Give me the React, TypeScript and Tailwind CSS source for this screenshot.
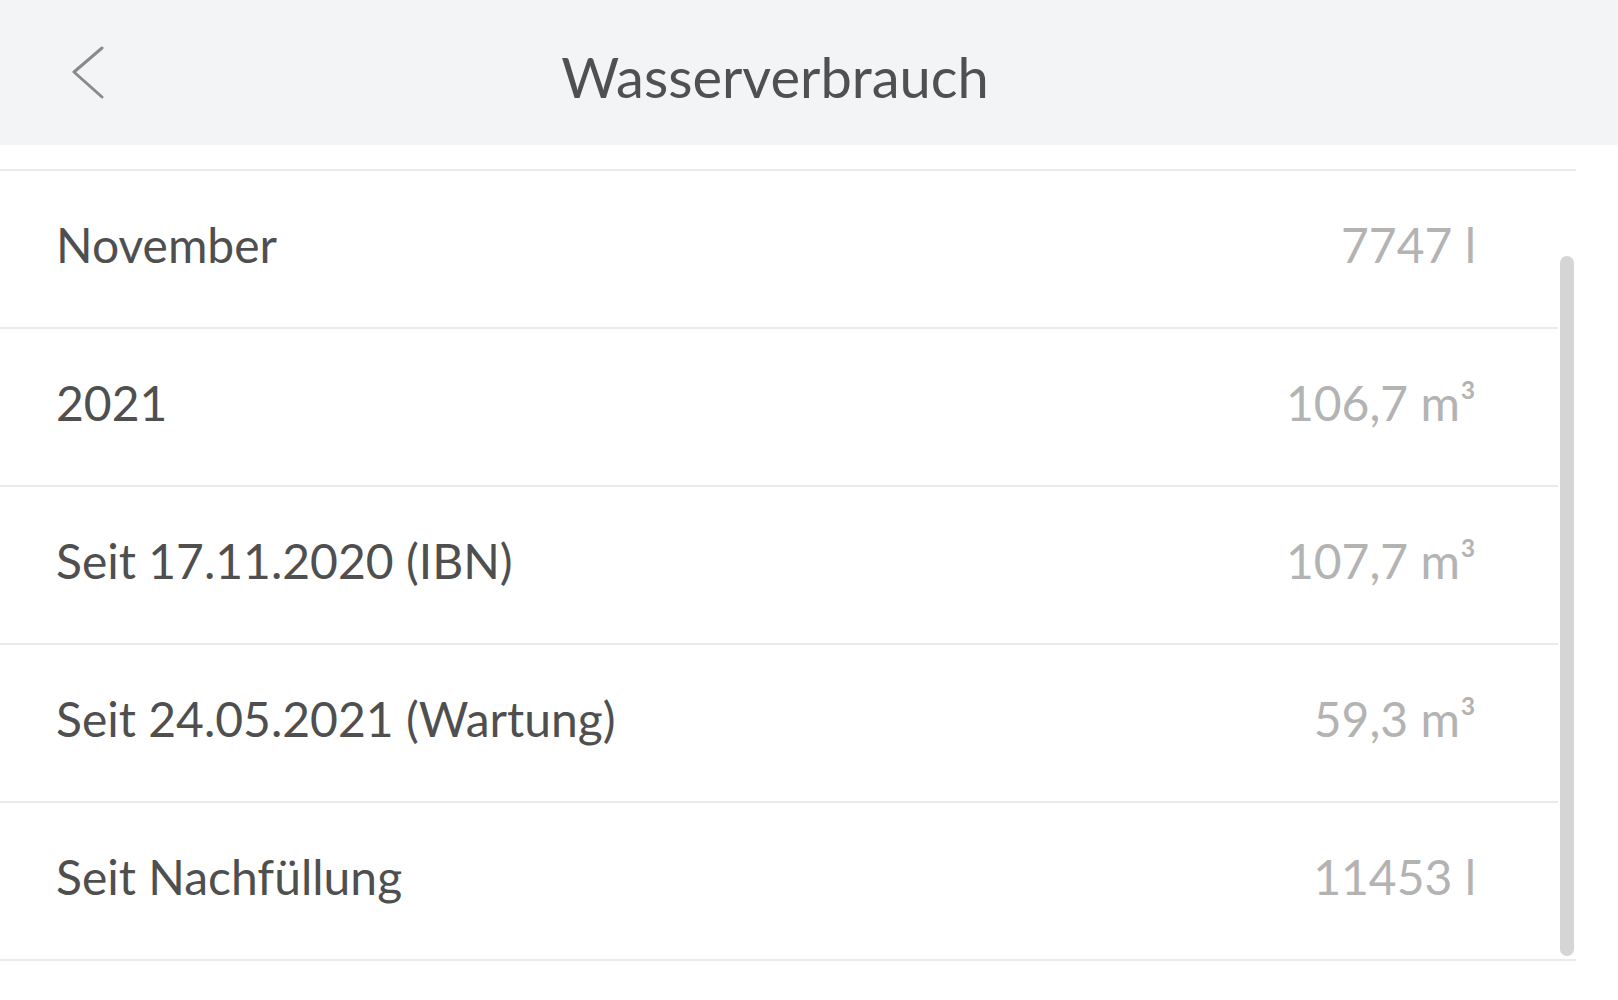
const rows = [
  { label: "November", value: "7747 l" },
  { label: "2021", value: "106,7 m³" },
  { label: "Seit 17.11.2020 (IBN)", value: "107,7 m³" },
  { label: "Seit 24.05.2021 (Wartung)", value: "59,3 m³" },
  { label: "Seit Nachfüllung", value: "11453 l" },
];

export default function App() {
  return (
    <div className="h-[1000px] w-[1618px] overflow-hidden bg-white font-['Lato',sans-serif]">
      {/* Header */}
      <header className="flex h-[145px] items-center bg-[#f3f4f6]">
        <button className="ml-[70px] flex h-[56px] w-[36px] items-center justify-center">
          <svg width="34" height="54" viewBox="0 0 34 54" fill="none">
            <path d="M31 2 L3 26 L31 51" stroke="#8a8a8a" strokeWidth="3" strokeLinecap="round" strokeLinejoin="round" />
          </svg>
        </button>
        <h1 className="mr-[174px] flex-1 pt-[8px] text-center text-[56px] leading-none text-[#505050]">
          Wasserverbrauch
        </h1>
      </header>

      {/* List */}
      <div className="relative mt-[24px] w-[1576px]">
        <div className="border-t-2 border-[#ebebeb]">
          {rows.map((row) => (
            <div
              key={row.label}
              className="flex h-[158px] items-center justify-between border-b-2 border-[#ebebeb] pb-[8px] pl-[56px] pr-[100px]"
            >
              <span className="text-[48px] text-[#4f4f4f]">{row.label}</span>
              <span className="text-[48px] text-[#b3b3b3]">{row.value}</span>
            </div>
          ))}
        </div>

        {/* Scrollbar thumb */}
        <div className="absolute right-0 top-[85px] h-[704px] w-[18px] rounded-full border-2 border-white bg-[#d5d5d5]" />
      </div>
    </div>
  );
}
